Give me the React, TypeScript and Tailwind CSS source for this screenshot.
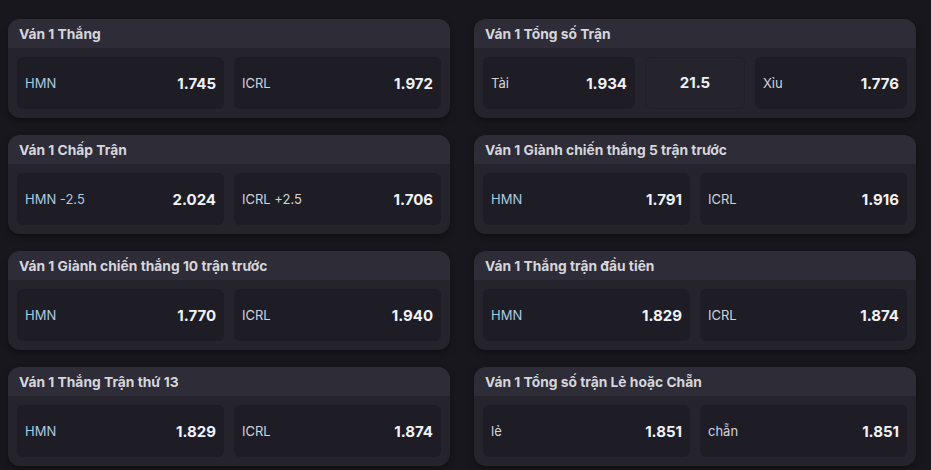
type Cell = { label?: string; odds: string; center?: boolean };

interface Market {
  title: string;
  cells: Cell[];
}

const leftMarkets: Market[] = [
  { title: "Ván 1 Thắng", cells: [{ label: "HMN", odds: "1.745" }, { label: "ICRL", odds: "1.972" }] },
  { title: "Ván 1 Chấp Trận", cells: [{ label: "HMN -2.5", odds: "2.024" }, { label: "ICRL +2.5", odds: "1.706" }] },
  { title: "Ván 1 Giành chiến thắng 10 trận trước", cells: [{ label: "HMN", odds: "1.770" }, { label: "ICRL", odds: "1.940" }] },
  { title: "Ván 1 Thắng Trận thứ 13", cells: [{ label: "HMN", odds: "1.829" }, { label: "ICRL", odds: "1.874" }] },
];

const rightMarkets: Market[] = [
  {
    title: "Ván 1 Tổng số Trận",
    cells: [{ label: "Tài", odds: "1.934" }, { odds: "21.5", center: true }, { label: "Xỉu", odds: "1.776" }],
  },
  { title: "Ván 1 Giành chiến thắng 5 trận trước", cells: [{ label: "HMN", odds: "1.791" }, { label: "ICRL", odds: "1.916" }] },
  { title: "Ván 1 Thắng trận đầu tiên", cells: [{ label: "HMN", odds: "1.829" }, { label: "ICRL", odds: "1.874" }] },
  { title: "Ván 1 Tổng số trận Lẻ hoặc Chẵn", cells: [{ label: "lẻ", odds: "1.851" }, { label: "chẵn", odds: "1.851" }] },
];

function OddsCell({ cell }: { cell: Cell }) {
  if (cell.center) {
    return (
      <div className="flex w-[100px] shrink-0 items-center justify-center rounded-md border border-[#212029] bg-[#25242d]">
        <span className="text-[15px] font-bold text-[#eef0f6]">{cell.odds}</span>
      </div>
    );
  }
  const isTeam = cell.label?.startsWith("HMN");
  return (
    <div className="flex flex-1 items-center justify-between rounded-md bg-[#1e1d25] px-[8px]">
      <span className={`text-[13px] leading-none ${isTeam ? "text-[#a9cbe4]" : "text-[#d2d4dc]"}`}>{cell.label}</span>
      <span className="text-[15px] font-bold leading-none text-[#f1f2f7]">{cell.odds}</span>
    </div>
  );
}

function MarketCard({ market }: { market: Market }) {
  return (
    <div className="h-[99px] overflow-hidden rounded-xl bg-[#25242d] shadow-[0_3px_6px_rgba(0,0,0,0.35)]">
      <div className="flex h-[29px] items-center bg-[#2d2c37] px-[11px] pt-[1px]">
        <span className="text-[13.8px] font-bold text-[#d6d6dc]">{market.title}</span>
      </div>
      <div className="flex h-[70px] gap-[10px] p-[9px]">
        {market.cells.map((cell, i) => (
          <OddsCell key={i} cell={cell} />
        ))}
      </div>
    </div>
  );
}

export default function App() {
  return (
    <div
      className="min-h-[470px] w-[931px] bg-[#18171d] pt-[19px] pl-[8px] pr-[15px]"
      style={{ fontFamily: "Inter, 'Noto Sans', sans-serif" }}
    >
      <div className="grid grid-cols-2 gap-x-[24px]">
        <div className="flex flex-col gap-[17px]">
          {leftMarkets.map((m) => (
            <MarketCard key={m.title} market={m} />
          ))}
        </div>
        <div className="flex flex-col gap-[17px]">
          {rightMarkets.map((m) => (
            <MarketCard key={m.title} market={m} />
          ))}
        </div>
      </div>
    </div>
  );
}
